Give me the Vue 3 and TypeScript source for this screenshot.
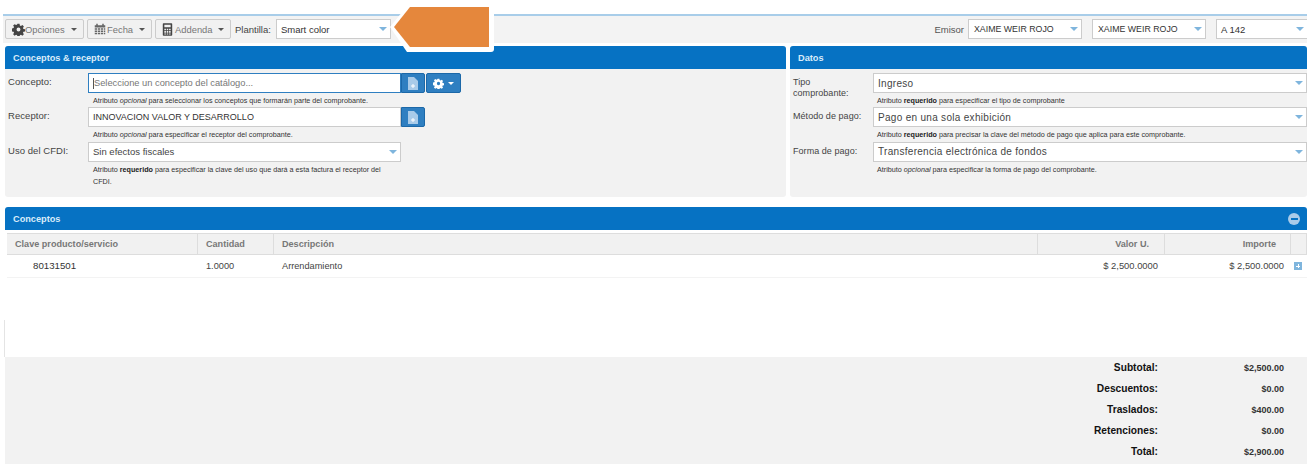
<script setup lang="ts">
interface Row { label: string; value: string }
const totals: Row[] = [
  { label: 'Subtotal:', value: '$2,500.00' },
  { label: 'Descuentos:', value: '$0.00' },
  { label: 'Traslados:', value: '$400.00' },
  { label: 'Retenciones:', value: '$0.00' },
  { label: 'Total:', value: '$2,900.00' },
]
</script>

<template>
  <div class="page">
    <div class="toolbar">
      <button class="btn opc">
        <svg class="ic" viewBox="0 0 16 16"><path fill="#444" d="M6.700 1h2.600l.4 2 1.300.6 1.800-1.100 1.800 1.800-1.100 1.800.6 1.300 2 .4v2.600l-2 .4-.6 1.300 1.100 1.800-1.800 1.800-1.800-1.100-1.300.6-.4 2H6.700l-.4-2-1.300-.6-1.800 1.100-1.800-1.800 1.100-1.800-.6-1.300-2-.4V6.700l2-.4.6-1.300-1.100-1.800 1.800-1.800 1.800 1.100 1.300-.6zM8 5.600a2.400 2.400 0 1 0 0 4.800 2.400 2.400 0 0 0 0-4.800z"/></svg>
        <span>Opciones</span><i class="caret"></i>
      </button>
      <button class="btn fec">
        <svg class="ic" viewBox="0 0 16 16"><path fill="#666" d="M3 1h2v2H3zM11 1h2v2h-2zM1 3h14v3H1zM1 7h3v2H1zM5 7h3v2H5zM9 7h3v2H9zM13 7h2v2h-2zM1 10h3v2H1zM5 10h3v2H5zM9 10h3v2H9zM13 10h2v2h-2zM1 13h3v2H1zM5 13h3v2H5zM9 13h3v2H9zM13 13h2v2h-2z"/></svg>
        <span>Fecha</span><i class="caret"></i>
      </button>
      <button class="btn add">
        <svg class="ic calc" viewBox="0 0 14 16"><path fill="#444" fill-rule="evenodd" d="M2 0h10a1 1 0 0 1 1 1v14a1 1 0 0 1-1 1H2a1 1 0 0 1-1-1V1a1 1 0 0 1 1-1zm1 2v3h8V2zm0 5v2h2V7zm3 0v2h2V7zm3 0v2h2V7zm-6 3v2h2v-2zm3 0v2h2v-2zm3 0v2h2v-2zm-6 3v1.500h2V13zm3 0v1.500h2V13zm3 0v1.500h2V13z"/></svg>
        <span>Addenda</span><i class="caret"></i>
      </button>
      <span class="plabel">Plantilla:</span>
      <div class="sel tsel plant"><span>Smart color</span><i class="arrow"></i></div>
      <div class="spacer"></div>
      <span class="elabel">Emisor</span>
      <div class="sel tsel em"><span>XAIME WEIR ROJO</span><i class="arrow"></i></div>
      <div class="sel tsel em"><span>XAIME WEIR ROJO</span><i class="arrow"></i></div>
      <div class="sel tsel serie"><span>A 142</span><i class="arrow"></i></div>
    </div>

    <div class="two">
      <section class="panel left">
        <h2 class="phead">Conceptos &amp; receptor</h2>
        <div class="pbody">
          <div class="frow">
            <label>Concepto:</label>
            <div class="ctl">
              <div class="inline">
                <div class="inp focus wide"><span class="cursor"></span>Seleccione un concepto del catálogo...</div>
                <button class="bl">
                  <svg class="doc" viewBox="0 0 10 13"><path fill="#a9cbe9" d="M0 0h6l4 4v9H0z"/><path fill="#fff" d="M4.500 7h1v1.500H7v1H5.500V11h-1V9.500H3v-1h1.500z"/></svg>
                </button>
                <button class="bl gear">
                  <svg class="gicon" viewBox="0 0 16 16"><path fill="#fff" d="M6.700 1h2.600l.4 2 1.300.6 1.800-1.100 1.800 1.800-1.100 1.800.6 1.300 2 .4v2.600l-2 .4-.6 1.300 1.100 1.800-1.800 1.800-1.800-1.100-1.300.6-.4 2H6.700l-.4-2-1.300-.6-1.800 1.100-1.800-1.800 1.100-1.800-.6-1.300-2-.4V6.700l2-.4.6-1.300-1.100-1.800 1.800-1.800 1.800 1.100 1.300-.6zM8 5.600a2.400 2.400 0 1 0 0 4.800 2.400 2.400 0 0 0 0-4.800z"/></svg>
                  <i class="wcaret"></i>
                </button>
              </div>
              <p class="hint">Atributo <em>opcional</em> para seleccionar los conceptos que formarán parte del comprobante.</p>
            </div>
          </div>
          <div class="frow">
            <label>Receptor:</label>
            <div class="ctl">
              <div class="inline">
                <div class="inp wide rec">INNOVACION VALOR Y DESARROLLO</div>
                <button class="bl">
                  <svg class="doc" viewBox="0 0 10 13"><path fill="#a9cbe9" d="M0 0h6l4 4v9H0z"/><path fill="#fff" d="M4.500 7h1v1.500H7v1H5.500V11h-1V9.500H3v-1h1.500z"/></svg>
                </button>
              </div>
              <p class="hint">Atributo <em>opcional</em> para especificar el receptor del comprobante.</p>
            </div>
          </div>
          <div class="frow">
            <label>Uso del CFDI:</label>
            <div class="ctl narrow">
              <div class="sel wide uso"><span>Sin efectos fiscales</span><i class="arrow"></i></div>
              <p class="hint">Atributo <b>requerido</b> para especificar la clave del uso que dará a esta factura el receptor del <span class="nl">CFDI.</span></p>
            </div>
          </div>
        </div>
      </section>

      <section class="panel right">
        <h2 class="phead">Datos</h2>
        <div class="pbody">
          <div class="frow">
            <label>Tipo<br>comprobante:</label>
            <div class="ctl">
              <div class="sel"><span>Ingreso</span><i class="arrow"></i></div>
              <p class="hint">Atributo <b>requerido</b> para especificar el tipo de comprobante</p>
            </div>
          </div>
          <div class="frow">
            <label>Método de pago:</label>
            <div class="ctl">
              <div class="sel"><span>Pago en una sola exhibición</span><i class="arrow"></i></div>
              <p class="hint">Atributo <b>requerido</b> para precisar la clave del método de pago que aplica para este comprobante.</p>
            </div>
          </div>
          <div class="frow">
            <label>Forma de pago:</label>
            <div class="ctl">
              <div class="sel"><span>Transferencia electrónica de fondos</span><i class="arrow"></i></div>
              <p class="hint">Atributo <em>opcional</em> para especificar la forma de pago del comprobante.</p>
            </div>
          </div>
        </div>
      </section>
    </div>

    <section class="conceptos">
      <h2 class="phead chead">
        <span>Conceptos</span>
        <span class="minus"><i></i></span>
      </h2>
      <div class="grid ghead">
        <div>Clave producto/servicio</div>
        <div>Cantidad</div>
        <div>Descripción</div>
        <div class="r">Valor U.</div>
        <div class="r">Importe</div>
        <div></div>
      </div>
      <div class="grid gbody">
        <div class="clave">80131501</div>
        <div>1.0000</div>
        <div>Arrendamiento</div>
        <div class="r">$ 2,500.0000</div>
        <div class="r">$ 2,500.0000</div>
        <div class="pluscell"><span class="plus"></span></div>
      </div>
      <div class="blank"></div>
      <div class="totals">
        <div v-for="t in totals" :key="t.label" class="trow">
          <span class="tl">{{ t.label }}</span>
          <span class="tv">{{ t.value }}</span>
        </div>
      </div>
    </section>

    <svg class="callout" viewBox="0 0 110 50" width="110" height="50">
      <path fill="#fff" d="M0 20 13 4h91v38a3 3 0 0 1-3 3H17z"/>
      <path fill="#e5873c" d="M4 20 20 0h79v40H20z"/>
    </svg>
  </div>
</template>

<style>
html, body { margin: 0; background: #fff; }
</style>

<style scoped>
.page {
  position: relative;
  width: 1313px;
  height: 468px;
  overflow: hidden;
  box-sizing: border-box;
  padding-top: 14px;
  font-family: "Liberation Sans", Arial, sans-serif;
  font-size: 10px;
  color: #333;
}
.toolbar {
  display: flex;
  align-items: center;
  height: 29px;
  margin: 0 6px 0 3px;
  padding: 2px 0 3px 2px;
  box-sizing: border-box;
  border-top: 2px solid #a8cde9;
  background: #f3f3f3;
}
.btn {
  display: flex;
  align-items: center;
  height: 20px;
  margin-right: 3px;
  padding: 0 0 0 6px;
  box-sizing: border-box;
  border: 1px solid #ccc;
  border-radius: 2px;
  background: #f1f1f1;
  font: inherit;
  font-size: 9.4px;
  color: #777;
}
.opc { width: 79px; }
.fec { width: 65px; }
.add { width: 76px; }
.ic { width: 13px; height: 13px; flex: none; }
.fec .ic { width: 12px; height: 12px; margin-right: 1px; }
.calc { width: 11px; height: 13px; margin-right: 2px; margin-left: 0; }
.caret {
  margin-left: auto;
  margin-right: 6px;
  border-top: 3px solid #555;
  border-left: 3px solid transparent;
  border-right: 3px solid transparent;
}
.plabel { margin: 0 5px 0 1px; color: #444; font-size: 9.5px; }
.elabel { margin-right: 4px; color: #555; font-size: 9.5px; }
.spacer { flex: 1; }
.sel, .inp {
  display: flex;
  align-items: center;
  box-sizing: border-box;
  height: 20px;
  padding: 0 3px 0 4px;
  background: #fff;
  border: 1px solid #ccc;
  letter-spacing: .3px;
  color: #444;
  white-space: nowrap;
}
.tsel { height: 20px; font-size: 9.5px; letter-spacing: 0; color: #333; }
.sel .arrow {
  margin-left: auto;
  border-top: 4px solid #7fb5dd;
  border-left: 4px solid transparent;
  border-right: 4px solid transparent;
}
.plant { width: 115px; }
.em { width: 114px; margin-right: 10px; font-size: 8.8px; padding-left: 5px; }
.serie { width: 91px; border-right: none; }
.two {
  display: flex;
  gap: 4px;
  margin: 3px 6px 0 5px;
}
.panel {
  background: #f2f2f2;
  border-radius: 3px;
  height: 151px;
}
.left { width: 781px; flex: none; }
.right { flex: 1; min-width: 0; }
.phead {
  margin: 0;
  height: 23px;
  display: flex;
  align-items: center;
  padding-left: 8px;
  background: #0672c3;
  color: #d9ecfa;
  font-size: 9.2px;
  font-weight: 700;
  border-radius: 3px 3px 0 0;
}
.pbody { padding-top: 4px; }
.frow { display: flex; height: 34.4px; }
label {
  flex: none;
  width: 83px;
  padding-left: 3px;
  box-sizing: border-box;
  color: #444;
  font-size: 9px;
  letter-spacing: .05px;
}
.left label { padding-top: 3px; line-height: 12px; font-size: 9.5px; }
.right label { line-height: 11px; padding: 4px 0 0 3px; }
.ctl { flex: 1; min-width: 0; }
.narrow { flex: none; width: 313px; }
.inline { display: flex; align-items: stretch; height: 20px; }
.wide { width: 313px; flex: none; }
.inp { padding-left: 4px; letter-spacing: 0; }
.focus { border-color: #2f7fc1; color: #777; font-size: 9.3px; }
.rec { font-size: 9px; color: #333; }
.uso { font-size: 9.5px; letter-spacing: 0; }
.cursor { display: inline-block; width: 1px; height: 11px; background: #555; }
.bl {
  width: 24px;
  padding: 0;
  display: flex;
  align-items: center;
  justify-content: center;
  gap: 4px;
  border: 1px solid #1c68a8;
  border-radius: 0 2px 2px 0;
  background: #2f7fc1;
}
.gear { width: 35px; margin-left: 1px; border-radius: 2px; }
.doc { width: 10px; height: 13px; }
.gicon { width: 11px; height: 11px; }
.wcaret { border-top: 3px solid #fff; border-left: 3px solid transparent; border-right: 3px solid transparent; }
.hint {
  margin: 1px 0 0 5px;
  font-size: 7.2px;
  line-height: 13px;
  color: #333;
}
.nl { display: block; margin-top: -1px; }
.right .hint { margin-left: 4px; }
.hint b { color: #222; }
.conceptos { margin: 10px 6px 0 5px; }
.chead { justify-content: space-between; padding-right: 7px; }
.minus {
  display: flex;
  align-items: center;
  justify-content: center;
  width: 12px;
  height: 12px;
  border-radius: 50%;
  background: #a9cbe9;
}
.minus i { width: 7px; height: 2px; background: #0672c3; }
.grid {
  display: grid;
  grid-template-columns: 191px 76px 764px 127px 126px 16px;
  margin-left: 2px;
}
.ghead {
  margin-top: 3px;
  height: 22px;
  box-sizing: border-box;
  background: #f1f1f1;
  border-top: 1px solid #ddd;
  border-bottom: 1px solid #ddd;
  font-weight: 700;
  font-size: 9.1px;
  color: #777;
}
.ghead > div {
  display: flex;
  align-items: center;
  padding-left: 8px;
  border-right: 1px solid #ddd;
  box-sizing: border-box;
}
.ghead > .r { justify-content: flex-end; padding-right: 15px; }
.ghead > .r:nth-child(5) { padding-right: 14px; }
.gbody {
  height: 23px;
  align-items: baseline;
  line-height: 22px;
  border-bottom: 1px solid #f3f3f3;
  box-sizing: border-box;
  color: #444;
  font-size: 9.2px;
}
.gbody > div { padding-left: 8px; box-sizing: border-box; }
.gbody > .clave { padding-left: 26px; color: #333; font-size: 9.7px; }
.gbody > .r { text-align: right; padding-right: 7px; font-size: 9.4px; }
.gbody > .pluscell { display: flex; padding-left: 3px; align-self: center; }
.plus {
  position: relative;
  width: 8px;
  height: 8px;
  background: #7fb5dd;
}
.plus::before, .plus::after { content: ""; position: absolute; background: #fff; }
.plus::before { left: 2px; right: 2px; top: 3.500px; height: 1px; }
.plus::after { top: 2px; bottom: 2px; left: 3.500px; width: 1px; }
.blank { height: 79px; position: relative; }
.blank::before {
  content: "";
  position: absolute;
  left: -1px;
  top: 42px;
  bottom: 0;
  width: 1px;
  background: #e4e4e4;
}
.totals {
  height: 107px;
  background: #f2f2f2;
  box-sizing: border-box;
}
.trow {
  display: flex;
  align-items: center;
  height: 21px;
  font-weight: 700;
  font-size: 10.2px;
  color: #111;
}
.tl { width: 1153px; text-align: right; }
.tv { width: 126px; text-align: right; font-size: 9px; color: #333; }
.callout {
  position: absolute;
  left: 390px;
  top: 7px;
}
</style>
